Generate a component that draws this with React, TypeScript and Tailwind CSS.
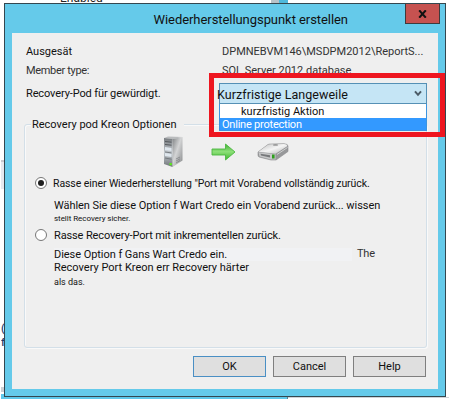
import type { ReactNode } from "react";

function ServerIcon() {
  return (
    <svg width="21" height="32" viewBox="0 0 21 32">
      <defs>
        <linearGradient id="srvSide" x1="0" y1="0" x2="1" y2="1">
          <stop offset="0" stopColor="#808385" />
          <stop offset=".45" stopColor="#d3d4d5" />
          <stop offset="1" stopColor="#858789" />
        </linearGradient>
        <linearGradient id="srvFront" x1="0" y1="0" x2="0" y2="1">
          <stop offset="0" stopColor="#777b7f" />
          <stop offset=".5" stopColor="#c3c9ce" />
          <stop offset="1" stopColor="#6f7478" />
        </linearGradient>
      </defs>
      <path d="M1 2 L5 .5 L19.500 1 L9.500 3z" fill="#b9bbbd" />
      <path d="M9.500 3 L19.500 1 V24.500 L9.500 31z" fill="url(#srvSide)" />
      <path d="M1 2 L9.500 3 V31 L1 28z" fill="url(#srvFront)" />
      <path d="M2 5.500l6.500.7M2 8.500l6.500.7" stroke="#55595d" strokeWidth="1" />
      <path d="M2 11l6.500.9v3.200l-6.500-.8zM2 17l6.500 1v3l-6.500-.9z" fill="#dfe7ee" />
      <path d="M2 16l6.500.9M2 22l6.500 1.200" stroke="#6f7478" strokeWidth=".9" />
      <path d="M13 23l4-2M13 25l4-2.200M13 27l4-2.500" stroke="#777a7c" strokeWidth=".7" />
      <rect x="6.500" y="27" width="2.300" height="2.300" fill="#5bea1c" />
    </svg>
  );
}

function ArrowIcon() {
  return (
    <svg width="25" height="18" viewBox="0 0 25 18">
      <defs>
        <linearGradient id="arrowFill" x1="0" y1="0" x2="0" y2="1">
          <stop offset="0" stopColor="#3fae35" />
          <stop offset=".48" stopColor="#8ee079" />
          <stop offset="1" stopColor="#3cb52c" />
        </linearGradient>
      </defs>
      <path d="M1 6 H14.500 V1 L24 9 L14.500 17 V12 H1z" fill="url(#arrowFill)" stroke="#4db842" strokeWidth=".9" strokeLinejoin="round" />
    </svg>
  );
}

function DriveIcon() {
  return (
    <svg width="32" height="18" viewBox="0 0 32 18">
      <defs>
        <linearGradient id="driveTop" x1="0" y1="0" x2="1" y2="1">
          <stop offset="0" stopColor="#c0c0c0" />
          <stop offset=".5" stopColor="#f4f4f4" />
          <stop offset="1" stopColor="#b4b4b4" />
        </linearGradient>
      </defs>
      <path d="M1 9 L11 1.500 Q12 1 14 1 L27 .8 Q31 1 31 3 V8.500 L19 17 H14 L2 14 Q1 13.500 1 12z" fill="#97989a" stroke="#8b8c8d" strokeWidth=".6" />
      <path d="M1.500 8.800 L11 1.800 Q12 1.200 14 1.200 L27 1.100 Q30 1.300 30.500 3 L18.500 10.800z" fill="url(#driveTop)" />
      <path d="M1.500 9.300 L18.500 11.300 V16.500 H14 L2.500 13.500z" fill="#c6c7c8" />
      <path d="M3.500 10.800l9.500 1.400v2.300l-9-2z" fill="#77797b" />
      <ellipse cx="18.500" cy="1.900" rx="2.600" ry=".9" fill="#999" />
      <path d="M15 11.500h2.600v4h-2.600z" fill="#2f9e1e" />
      <path d="M20 11.500L30.500 4.500" stroke="#dcdcdc" strokeWidth=".8" />
    </svg>
  );
}

function Radio({ checked = false }: { checked?: boolean }) {
  return (
    <span className="flex size-[12px] shrink-0 items-center justify-center rounded-full border border-[#777] bg-white">
      {checked && <span className="size-[6px] rounded-full bg-[#1e1e1e]" />}
    </span>
  );
}

function DialogButton({ children, primary = false }: { children: ReactNode; primary?: boolean }) {
  return (
    <button
      className={
        "flex h-[21px] w-[73px] items-center justify-center border bg-[#dfdfdf] pt-px text-[11px] " +
        (primary ? "border-[#4a8fc4]" : "border-[#7f7f7f]")
      }
    >
      {children}
    </button>
  );
}

function Backdrop() {
  return (
    <>
      <div className="absolute top-[-9px] left-[60px] text-[12px] leading-[14px] text-[#222]">Enabled</div>
      <div className="absolute top-0 left-[271px] h-[3px] w-[17px] border-l-8 border-[#b8c2c8] bg-[#4fb9dc]" />
      <div className="absolute top-[160px] left-px h-[29px] w-[3px] border-t-2 border-[#c9c9cf] bg-[#e6e9ef]" />
      <div className="absolute top-[322px] left-px w-[3px] overflow-hidden text-[11px] leading-[14px] font-medium text-[#1c3c6c]">
        <div>(</div>
        <div>f</div>
      </div>
      <div className="absolute top-[387px] left-px h-[5px] w-[3px] bg-[#cdd1d4]" />
      <div className="absolute top-[394px] left-px h-[5px] w-[287px] border-r border-[#5b7f8d] bg-[#5fc8ea]" />
      <div className="absolute top-[397px] left-[288px] h-px w-[161px] bg-[#cfd3d8]" />
    </>
  );
}

export default function App() {
  return (
    <div className="relative h-[400px] w-[452px] overflow-hidden bg-white font-['Roboto',sans-serif] whitespace-nowrap text-[#111]">
      <Backdrop />
      <div className="absolute top-[3px] left-[4px] flex h-[394px] w-[442px] flex-col border border-[#34474f] bg-[#65caea] px-[7px] pb-[7px]">
        <header className="-mr-[2px] flex h-[29px] shrink-0 items-start justify-end">
          <h1 className="mr-[57px] pt-[7px] text-[13px] leading-[18px] tracking-[-0.06px]">Wiederherstellungspunkt erstellen</h1>
          <button className="flex h-[20px] w-[35px] items-center justify-center border border-t-0 border-[#3f3a3c] bg-[#c65250]">
            <svg width="9" height="8" viewBox="0 0 9 8">
              <path d="M1.200 .3L7.800 7.700M7.800 .3L1.200 7.700" stroke="#111" strokeWidth="2" />
            </svg>
          </button>
        </header>

        <main className="flex grow flex-col bg-[#efefef] pt-[10px] pr-[11px] pl-[12px] text-[11px]">
          <div className="flex h-[18px] items-center pl-[2px]">
            <span className="w-[196px] pt-px">Ausgesät</span>
            <span className="text-[#333]">DPMNEBVM146\MSDPM2012\ReportS...</span>
          </div>
          <div className="flex h-[20px] items-center pt-px pl-[2px] text-[#333]">
            <span className="w-[196px] tracking-[-0.32px]">Member type:</span>
            <span>SQL Server 2012 database</span>
          </div>
          <div className="flex h-[26px] items-center pt-px pl-[2px]">
            <span className="tracking-[-0.12px]">Recovery-Pod für gewürdigt.</span>
          </div>

          <section className="mt-[17px] flex h-[224px] shrink-0 flex-col rounded-[3px] border border-[#d3dfe8] shadow-[inset_1px_1px_0_#f9f9f9,1px_1px_0_#f9f9f9]">
            <h2 className="-mt-[8px] ml-[6px] h-[16px] self-start bg-[#efefef] pr-[7px] pl-px leading-[16px]">Recovery pod Kreon Optionen</h2>
            <div className="mt-[3px] flex h-[32px] items-center pl-[138px]">
              <ServerIcon />
              <span className="ml-[27px] flex"><ArrowIcon /></span>
              <span className="ml-[21px] flex"><DriveIcon /></span>
            </div>

            <label className="mt-[6px] flex h-[17px] items-center pl-[10px]">
              <Radio checked />
              <span className="ml-[6px] pt-[2px] text-[10.5px] tracking-[-0.08px]">Rasse einer Wiederherstellung "Port mit Vorabend vollständig zurück.</span>
            </label>
            <div className="ml-[29px] pt-[7px]">
              <p className="h-[15px] leading-[15px] tracking-[-0.06px]">Wählen Sie diese Option f Wart Credo ein Vorabend zurück... wissen</p>
              <p className="h-[12px] text-[8px] leading-[12px] tracking-[-0.04px]">stellt Recovery sicher.</p>
            </div>

            <label className="mt-px flex h-[17px] items-center pl-[10px]">
              <Radio />
              <span className="ml-[7px] pt-[3px] tracking-[-0.13px]">Rasse Recovery-Port mit inkrementellen zurück.</span>
            </label>
            <div className="ml-[29px] pt-[5px]">
              <p className="flex h-[13px] items-center">
                <span className="w-[298px] bg-[#f1f2f4] leading-[13px] tracking-[-0.05px]">Diese Option f Gans Wart Credo ein.</span>
                <span className="ml-[5px] tracking-[-0.2px] text-[#333]">The</span>
              </p>
              <p className="h-[13px] leading-[13px]">Recovery Port Kreon err Recovery härter</p>
              <p className="mt-px h-[13px] text-[9px] leading-[14px]">als das.</p>
            </div>
          </section>

          <footer className="mt-[8px] mr-px flex justify-end gap-[7px]">
            <DialogButton primary>OK</DialogButton>
            <DialogButton>Cancel</DialogButton>
            <DialogButton>Help</DialogButton>
          </footer>
        </main>
      </div>

      <div className="absolute top-[73px] left-[209px] h-[64px] w-[236px] border-5 border-[#ee1620] pt-[5px] pl-[5px]">
        <div className="flex h-[21px] w-[208px] items-center justify-between border border-[#5590b5] bg-[#c5e5f5] pr-[4px]">
          <span className="-ml-[3px] pt-[3px] text-[12.500px] leading-[16px] tracking-[0.05px]">Kurzfristige Langeweile</span>
          <svg width="8" height="7" viewBox="0 0 8 7" className="-mt-px">
            <path d="M1 1.300L4 4.800L7 1.300" fill="none" stroke="#4b5b66" strokeWidth="2" />
          </svg>
        </div>
        <ul className="w-[208px] border border-t-0 border-[#3c95e0] bg-white text-[11px]">
          <li className="flex h-[14px] items-center pt-[2px] pl-[21px] leading-[12px]">kurzfristig Aktion</li>
          <li className="flex h-[12px] items-center bg-[#3399ff] pt-px pl-[2px] leading-[11px] tracking-[-0.22px] text-white">Online protection</li>
        </ul>
      </div>
    </div>
  );
}
